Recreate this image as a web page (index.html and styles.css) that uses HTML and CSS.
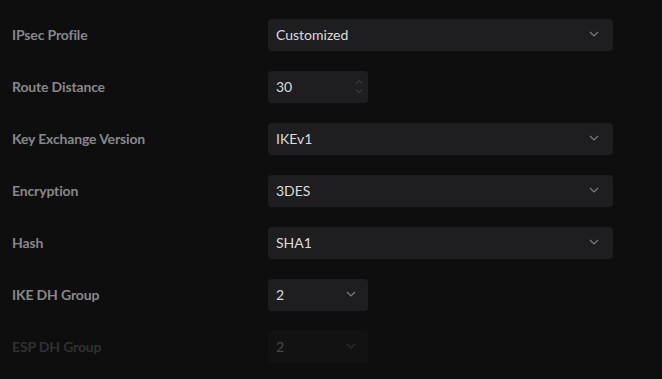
FILE: index.html
```html
<!DOCTYPE html>
<html lang="en">
<head>
    <meta charset="UTF-8">
    <title>VPN Settings</title>
    <link rel="stylesheet" href="styles.css">
</head>
<body>
    <div class="form">
        <div class="row">
            <label class="label">IPsec Profile</label>
            <div class="field select wide">
                <span>Customized</span>
                <svg class="chevron" viewBox="0 0 10 6"><path d="M1 1l4 4 4-4"/></svg>
            </div>
        </div>
        <div class="row">
            <label class="label">Route Distance</label>
            <div class="field number">
                <span>30</span>
                <div class="spin">
                    <svg viewBox="0 0 8 4"><path d="M1 3.5l3-3 3 3"/></svg>
                    <svg viewBox="0 0 8 4"><path d="M1 .5l3 3 3-3"/></svg>
                </div>
            </div>
        </div>
        <div class="row">
            <label class="label">Key Exchange Version</label>
            <div class="field select wide">
                <span>IKEv1</span>
                <svg class="chevron" viewBox="0 0 10 6"><path d="M1 1l4 4 4-4"/></svg>
            </div>
        </div>
        <div class="row">
            <label class="label">Encryption</label>
            <div class="field select wide">
                <span>3DES</span>
                <svg class="chevron" viewBox="0 0 10 6"><path d="M1 1l4 4 4-4"/></svg>
            </div>
        </div>
        <div class="row">
            <label class="label">Hash</label>
            <div class="field select wide">
                <span>SHA1</span>
                <svg class="chevron" viewBox="0 0 10 6"><path d="M1 1l4 4 4-4"/></svg>
            </div>
        </div>
        <div class="row">
            <label class="label">IKE DH Group</label>
            <div class="field select small">
                <span>2</span>
                <svg class="chevron" viewBox="0 0 10 6"><path d="M1 1l4 4 4-4"/></svg>
            </div>
        </div>
        <div class="row disabled">
            <label class="label">ESP DH Group</label>
            <div class="field select small">
                <span>2</span>
                <svg class="chevron" viewBox="0 0 10 6"><path d="M1 1l4 4 4-4"/></svg>
            </div>
        </div>
    </div>
</body>
</html>
```

FILE: styles.css
```css
body {
    margin: 0;
    background: #0e0e0f;
    font-family: 'Lato', sans-serif;
    height: 100vh;
    overflow: hidden;
}
.form {
    display: flex;
    flex-direction: column;
    gap: 20px;
    padding: 19px 0 0 12px;
}
.row {
    display: grid;
    grid-template-columns: 256px auto;
    align-items: center;
    height: 32px;
}
.label {
    font-size: 14px;
    font-weight: 700;
    letter-spacing: -0.15px;
    color: #88888a;
    padding-bottom: 2px;
}
.field {
    box-sizing: border-box;
    height: 32px;
    background: #1e1e20;
    border-radius: 4px;
    display: flex;
    align-items: center;
    justify-content: space-between;
    padding: 0 12px 2px 8px;
    font-size: 14px;
    color: #dcdcdd;
}
.wide {
    width: 345px;
    padding-right: 14px;
}
.small,
.number {
    width: 100px;
}
.number {
    padding-right: 5px;
    padding-bottom: 1px;
}
.chevron {
    width: 10px;
    height: 6px;
    fill: none;
    stroke: #7d7d80;
    stroke-width: 1.2;
}
.spin {
    display: flex;
    flex-direction: column;
    gap: 5px;
}
.spin svg {
    width: 8px;
    height: 4px;
    fill: none;
    stroke: #4d4d50;
    stroke-width: 1;
}
.disabled {
    opacity: 0.28;
}
```
